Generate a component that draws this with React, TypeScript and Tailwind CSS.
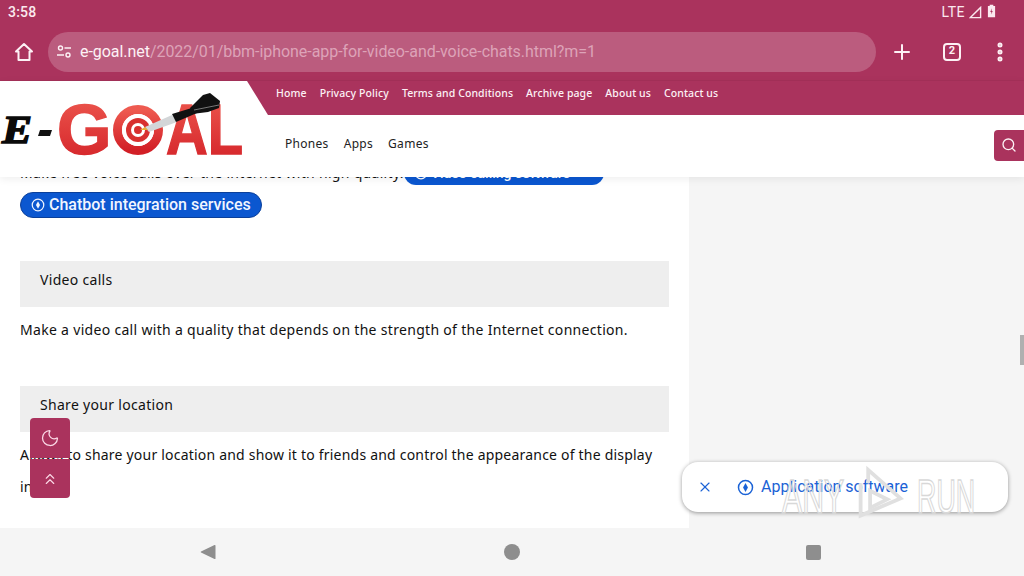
import { Plus, X, Search, Moon, ChevronsUp, EllipsisVertical } from "lucide-react";

const topLinks = ["Home", "Privacy Policy", "Terms and Conditions", "Archive page", "About us", "Contact us"];
const mainLinks = ["Phones", "Apps", "Games"];

function ChipIcon({ className }: { className: string }) {
  return (
    <svg viewBox="0 0 16 16" className={className} fill="none" stroke="currentColor" strokeWidth="1.4">
      <circle cx="8" cy="8" r="6.6" />
      <path d="M8 3.800 10.300 8 8 12.200 5.700 8Z" fill="currentColor" stroke="none" />
    </svg>
  );
}

function Logo() {
  return (
    <svg viewBox="0 0 250 96" className="w-[250px] h-[96px]">
      <defs>
        <linearGradient id="red" x1="0" y1="0" x2="0" y2="1">
          <stop offset="0" stopColor="#ee5a50" />
          <stop offset="1" stopColor="#d21f26" />
        </linearGradient>
      </defs>
      <text x="2" y="62" fontFamily="Liberation Serif" fontWeight="900" fontStyle="italic" fontSize="40" textLength="30" lengthAdjust="spacingAndGlyphs" fill="#0a0a0a" stroke="#0a0a0a" strokeWidth="1.5">E</text>
      <path d="M40 49H52L50 55H38Z" fill="#111" />
      <text x="57" y="73" fontFamily="Liberation Sans" fontWeight="700" fontSize="70" fill="url(#red)" stroke="url(#red)" strokeWidth="1.5">G</text>
      <circle cx="138" cy="49" r="20.500" fill="none" stroke="url(#red)" strokeWidth="9" />
      <circle cx="138" cy="49" r="16" fill="#fff" />
      <circle cx="138" cy="49" r="12" fill="#d8302f" />
      <circle cx="138" cy="49" r="7" fill="#fff" />
      <circle cx="138" cy="49" r="4" fill="#d8302f" />
      <text x="166" y="73" fontFamily="Liberation Sans" fontWeight="700" fontSize="70" textLength="77" lengthAdjust="spacingAndGlyphs" fill="url(#red)" stroke="url(#red)" strokeWidth="1.5">AL</text>
      <path d="M145 46 172 34 177 41 149 51Z" fill="#d3d6d8" />
      <path d="M172 33 195 26 197 32 176 41Z" fill="#111" />
      <path d="M190 27 203 14 210 12 220 20 219 27 208 31 192 33Z" fill="#111" />
      <path d="M194 29 219 24" stroke="#777" strokeWidth="1" />
      <path d="M145 46 140 49 148 49Z" fill="#e8b13a" />
    </svg>
  );
}

export default function App() {
  return (
    <div className="relative w-[1024px] h-[576px] overflow-hidden flex flex-col bg-white font-['Noto_Sans',sans-serif] text-[#111]">
      {/* status bar */}
      <div className="h-6 shrink-0 bg-[#aa335d] flex items-center justify-between pl-2 pr-[28px] text-white font-['Roboto',sans-serif] text-[14px]">
        <span className="font-medium text-[#fbe9ef] tracking-[0.2px]">3:58</span>
        <div className="flex items-center gap-1 text-[#fbe9ef]">
          <span className="tracking-[0.5px]">LTE</span>
          <svg viewBox="0 0 14 14" className="w-[13px] h-[13px]" fill="none" stroke="currentColor" strokeWidth="1.5">
            <path d="M1.500 12.500 12.500 1.500V12.500Z" />
          </svg>
          <svg viewBox="0 0 10 14" className="w-[9px] h-[14px] ml-[1px] -mt-0.5" fill="currentColor">
            <path d="M3 0h4v1.500h2V14H1V1.500h2Z" />
            <path d="M5.400 4 3.600 8h1.300l-.3 3 1.800-4H5.100Z" fill="#aa335d" />
          </svg>
        </div>
      </div>

      {/* browser toolbar */}
      <div className="h-[57px] shrink-0 bg-[#aa335d] flex items-center pb-[1px] border-b border-[#a53059]">
        <div className="w-12 flex justify-center">
          <svg viewBox="0 0 20 20" className="w-5 h-5 text-[#fdf1f5]" fill="none" stroke="currentColor" strokeWidth="2" strokeLinejoin="round">
            <path d="M10 2 2 9.500H4.500V18H15.500V9.500H18Z" />
          </svg>
        </div>
        <div className="w-[828px] h-10 rounded-full bg-[#bb5c7e] flex items-center pl-2 text-[16px] tracking-[-0.05px] font-['Roboto',sans-serif]">
          <svg viewBox="0 0 16 16" className="w-4 h-4 text-[#fdf1f5] mr-2" fill="none" stroke="currentColor" strokeWidth="1.4">
            <circle cx="4.500" cy="4" r="2" />
            <path d="M8.500 4H15M1 11h7" />
            <circle cx="12" cy="11" r="2" />
          </svg>
          <span className="text-[#fdf1f5] pt-[1px]">e-goal.net</span>
          <span className="text-[#dda3b8] pt-[1px]">/2022/01/bbm-iphone-app-for-video-and-voice-chats.html?m=1</span>
        </div>
        <div className="flex-1 flex items-center justify-between pl-[14px] pr-[12px] text-[#fdf1f5]">
          <Plus className="w-6 h-6" strokeWidth={2} />
          <div className="ml-[15px] w-[18px] h-[18px] rounded-[4px] border-2 border-[#fdf1f5] flex items-center justify-center text-[11px] font-bold font-['Roboto',sans-serif]">2</div>
          <EllipsisVertical className="ml-[13px] w-6 h-6" strokeWidth={3} />
        </div>
      </div>

      {/* site header */}
      <header className="relative z-10 h-[96px] shrink-0 bg-white flex shadow-[0_2px_8px_rgba(0,0,0,0.07)]">
        <div className="w-[247px] shrink-0">
          <Logo />
        </div>
        <div className="flex-1 flex flex-col">
          <nav className="h-[34px] pb-[8px] bg-[#aa335d] [clip-path:polygon(0_0,100%_0,100%_100%,21px_100%)] flex items-center gap-[13px] pl-[29px] text-[10.5px] font-medium tracking-[0.1px] text-[#fdf1f5]">
            {topLinks.map((link) => (
              <a key={link}>{link}</a>
            ))}
          </nav>
          <div className="flex-1 flex items-center pl-[38px] text-[12px] tracking-[0.3px] text-[#222]">
            <div className="flex gap-[15px] pb-[5px]">
              {mainLinks.map((link) => (
                <a key={link}>{link}</a>
              ))}
            </div>
            <button className="ml-auto w-[30px] h-[31px] bg-[#aa335d] rounded-l-[4px] flex items-center justify-center -mt-[2px]">
              <Search className="w-4 h-4 text-[#fdf1f5]" />
            </button>
          </div>
        </div>
      </header>

      {/* page content */}
      <main className="flex-1 min-h-0 flex overflow-hidden">
        <article className="w-[689px] shrink-0 pl-5 pr-5 text-[14px] tracking-[0.31px]">
          <div className="-mt-[19px] h-[30px] flex items-center whitespace-nowrap leading-[30px]">
            Make free voice calls over the internet with high quality.
            <span className="inline-flex items-center gap-[3px] h-[24px] w-[200px] px-[10px] rounded-full bg-[#0b57d0] text-white text-[14px] font-['Roboto',sans-serif] font-medium tracking-normal">
              <ChipIcon className="w-[14px] h-[14px]" />
              Video calling software
            </span>
          </div>
          <div className="mt-[4px] flex">
            <span className="inline-flex items-center gap-1 h-[26px] px-[10px] rounded-full bg-[#0b57d0] border border-[#0a3f9a] text-[#f1f5ff] text-[16px] font-['Roboto',sans-serif] font-medium tracking-normal">
              <ChipIcon className="w-[14px] h-[14px]" />
              Chatbot integration services
            </span>
          </div>
          <h3 className="mt-[43px] h-[46px] bg-[#eeeeee] pl-5 pt-[8px] font-normal">Video calls</h3>
          <p className="mt-[8px] leading-[30px]">Make a video call with a quality that depends on the strength of the Internet connection.</p>
          <h3 className="mt-[41px] h-[46px] bg-[#eeeeee] pl-5 pt-[8px] font-normal">Share your location</h3>
          <p className="mt-[7px] leading-[32px] tracking-[0.21px]">
            Allows to share your location and show it to friends and control the appearance of the display
            <br />
            in
          </p>
        </article>
        <aside className="flex-1 bg-[#f5f5f5] relative">
          <div className="absolute right-0 top-[158px] w-1 h-[30px] bg-[#b0b0b0]" />
        </aside>
      </main>

      {/* android nav bar */}
      <div className="h-12 shrink-0 bg-[#f5f5f5] flex items-center justify-center gap-[288px] pr-[3px]">
        <svg viewBox="0 0 16 16" className="w-4 h-4 text-[#8e8e8e]" fill="currentColor">
          <path d="M15.500 1.500V14.500C15.500 15 15 15.300 14.500 15L1 8.500C.6 8.200.6 7.800 1 7.500L14.500 1C15 .7 15.500 1 15.500 1.500Z" />
        </svg>
        <div className="w-4 h-4 rounded-full bg-[#8e8e8e]" />
        <div className="w-[15px] h-[15px] -ml-[2px] rounded-[2px] bg-[#8e8e8e]" />
      </div>

      {/* floating buttons */}
      <div className="absolute left-[30px] top-[418px] w-10 flex flex-col gap-[1px] text-[#fbd9e6]">
        <button className="h-[40px] bg-[#aa335d] rounded-t-[4px] flex items-center justify-center">
          <Moon className="w-5 h-5" strokeWidth={1.5} />
        </button>
        <button className="h-[39px] bg-[#aa335d] rounded-b-[4px] flex items-center justify-center">
          <ChevronsUp className="w-[18px] h-[18px]" strokeWidth={1.5} />
        </button>
      </div>

      {/* side chip */}
      <div className="absolute left-[682px] top-[462px] w-[326px] h-[50px] bg-white rounded-[16px] shadow-[0_1px_4px_rgba(0,0,0,0.4)] flex items-center pl-[15px] text-[#1a62d6] font-['Roboto',sans-serif] text-[16px]">
        <X className="w-4 h-4" strokeWidth={1.7} />
        <ChipIcon className="ml-[24px] w-[17px] h-[17px]" />
        <span className="ml-[7px]">Application software</span>
      </div>

      {/* watermark */}
      <div className="absolute left-[782px] top-[465px] w-[194px] h-[63px] flex items-center text-[48px] leading-none text-transparent [-webkit-text-stroke:1.5px_#d8d8d8] font-['Liberation_Sans',sans-serif] pointer-events-none">
        <span className="w-[71px] scale-x-[0.63] origin-left">ANY</span>
        <svg viewBox="0 0 60 64" className="w-[57px] h-[63px] text-[#e0e0e0]" fill="none" stroke="currentColor" strokeWidth="4">
          <path d="M8 18V52L50 34 16 4V18" />
          <path d="M18 26V44L36 35Z" />
        </svg>
        <span className="ml-[7px] w-[58px] scale-x-[0.56] origin-left">RUN</span>
      </div>
    </div>
  );
}
